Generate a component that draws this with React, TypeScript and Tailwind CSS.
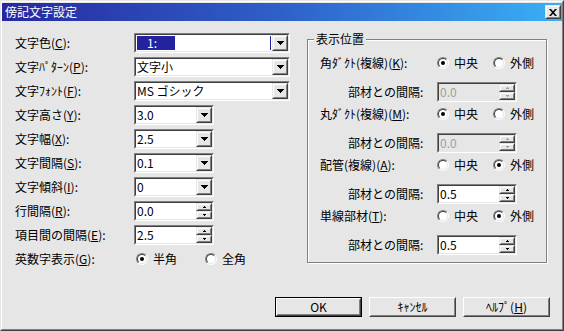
import type { ReactNode } from "react";

function Sunken({ className = "", disabled = false, children }: { className?: string; disabled?: boolean; children?: ReactNode }) {
  return (
    <div className={`border border-t-[#808080] border-l-[#808080] border-r-white border-b-white ${className}`}>
      <div
        className={`flex h-full w-full border border-t-[#404040] border-l-[#404040] border-r-[#e6e6e6] border-b-[#e6e6e6] ${
          disabled ? "bg-[#e6e6e6]" : "bg-white"
        }`}
      >
        {children}
      </div>
    </div>
  );
}

function Raised({ className = "", children }: { className?: string; children?: ReactNode }) {
  return (
    <div className={`border border-t-[#e6e6e6] border-l-[#e6e6e6] border-r-[#404040] border-b-[#404040] ${className}`}>
      <div className="flex h-full w-full items-center justify-center border border-t-white border-l-white border-r-[#808080] border-b-[#808080] bg-[#e6e6e6]">
        {children}
      </div>
    </div>
  );
}

const DropArrow = () => (
  <svg width="7" height="4" viewBox="0 0 7 4" className="block">
    <path d="M0 0h7v1H0zM1 1h5v1H1zM2 2h3v1H2zM3 3h1v1H3z" fill="#000" />
  </svg>
);

const TinyArrow = ({ up, disabled }: { up?: boolean; disabled?: boolean }) => (
  <svg width="3" height="2" viewBox="0 0 3 2" className="block">
    <path d={up ? "M1 0h1v1H1zM0 1h3v1H0z" : "M0 0h3v1H0zM1 1h1v1H1z"} fill={disabled ? "#a0a0a0" : "#000"} />
  </svg>
);

function Combo({ value, wide = false }: { value: string; wide?: boolean }) {
  return (
    <Sunken className={`h-[20px] ${wide ? "w-[156px]" : "w-[80px]"}`}>
      <span className="flex-1 truncate pl-px leading-[16px]">{value}</span>
      <Raised className="h-[16px] w-[16px]">
        <DropArrow />
      </Raised>
    </Sunken>
  );
}

function ColorCombo() {
  return (
    <Sunken className="h-[20px] w-[156px]">
      <div className="flex flex-1 items-center py-px pl-px">
        <span className="flex h-[14px] w-[38px] items-center bg-[#2323a0] pl-[10px] leading-[14px] text-white">1:</span>
        <span className="flex-1" />
        <span className="mr-[1px] h-[14px] w-px bg-[#2323a0]" />
      </div>
      <Raised className="h-[16px] w-[16px]">
        <DropArrow />
      </Raised>
    </Sunken>
  );
}

function Spin({ value, disabled = false }: { value: string; disabled?: boolean }) {
  return (
    <Sunken className="h-[20px] w-[80px]" disabled={disabled}>
      <span className={`flex-1 pl-px leading-[16px] ${disabled ? "text-[#a0a0a0]" : ""}`}>{value}</span>
      <div className="flex w-[16px] flex-col">
        <Raised className="h-[8px] w-full">
          <TinyArrow up disabled={disabled} />
        </Raised>
        <Raised className="h-[8px] w-full">
          <TinyArrow disabled={disabled} />
        </Raised>
      </div>
    </Sunken>
  );
}

function Radio({ checked }: { checked: boolean }) {
  return (
    <div className="flex h-[12px] w-[12px] shrink-0 rounded-full border border-t-[#808080] border-l-[#808080] border-r-white border-b-white">
      <div className="flex flex-1 items-center justify-center rounded-full border border-t-[#404040] border-l-[#404040] border-r-[#e6e6e6] border-b-[#e6e6e6] bg-white">
        {checked && <div className="h-[4px] w-[4px] rounded-full bg-black" />}
      </div>
    </div>
  );
}

function RadioOption({ label, checked, className = "" }: { label: string; checked: boolean; className?: string }) {
  return (
    <div className={`flex items-center gap-[5px] ${className}`}>
      <Radio checked={checked} />
      <span>{label}</span>
    </div>
  );
}

function Label({ text, mn, className = "" }: { text: string; mn?: string; className?: string }) {
  return (
    <span className={`shrink-0 ${className}`}>
      {text}
      {mn && (
        <>
          (<span className="underline">{mn}</span>)
        </>
      )}
      :
    </span>
  );
}

function PushButton({ children, isDefault = false }: { children: ReactNode; isDefault?: boolean }) {
  return (
    <div className={`h-[20px] w-[87px] ${isDefault ? "border border-black" : ""}`}>
      <div className="h-full w-full border border-t-white border-l-white border-r-[#404040] border-b-[#404040]">
        <div className="flex h-full w-full items-center justify-center border border-t-[#e6e6e6] border-l-[#e6e6e6] border-r-[#808080] border-b-[#808080]">
          {children}
        </div>
      </div>
    </div>
  );
}

const leftRows: { text: string; mn: string; control: ReactNode }[] = [
  { text: "文字色", mn: "C", control: <ColorCombo /> },
  { text: "文字ﾊﾟﾀｰﾝ", mn: "P", control: <Combo value="文字小" wide /> },
  { text: "文字ﾌｫﾝﾄ", mn: "F", control: <Combo value="MS ゴシック" wide /> },
  { text: "文字高さ", mn: "Y", control: <Combo value="3.0" /> },
  { text: "文字幅", mn: "X", control: <Combo value="2.5" /> },
  { text: "文字間隔", mn: "S", control: <Combo value="0.1" /> },
  { text: "文字傾斜", mn: "I", control: <Combo value="0" /> },
  { text: "行間隔", mn: "R", control: <Spin value="0.0" /> },
  { text: "項目間の間隔", mn: "E", control: <Spin value="2.5" /> },
];

const rightBlocks = [
  { text: "角ﾀﾞｸﾄ(複線)", mn: "K", outer: false, gap: "0.0", disabled: true },
  { text: "丸ﾀﾞｸﾄ(複線)", mn: "M", outer: false, gap: "0.0", disabled: true },
  { text: "配管(複線)", mn: "A", outer: true, gap: "0.5", disabled: false },
  { text: "単線部材", mn: "T", outer: true, gap: "0.5", disabled: false },
];

export default function App() {
  return (
    <div className="h-[331px] w-[564px] border border-t-[#e6e6e6] border-l-[#e6e6e6] border-r-[#404040] border-b-[#404040] bg-[#e6e6e6] font-['Noto_Sans_CJK_JP','Noto_Sans',sans-serif] text-[12px] leading-[14px] text-black">
      <div className="flex h-full w-full flex-col border border-t-white border-l-white border-r-[#808080] border-b-[#808080] pt-px">
        {/* Title bar */}
        <div className="flex h-[18px] items-center justify-between bg-gradient-to-r from-[#2727a0] via-[#2f60c8] to-[#3ab0f6] pl-[3px] pr-[1px]">
          <span className="text-[12px] leading-[14px] text-white">傍記文字設定</span>
          <Raised className="h-[14px] w-[16px]">
            <svg width="8" height="7" viewBox="0 0 8 7" className="block">
              <path d="M0 0h2l2 2.2L6 0h2L5 3.5 8 7H6L4 4.8 2 7H0l3-3.5z" fill="#000" />
            </svg>
          </Raised>
        </div>

        {/* Body */}
        <div className="flex h-[276px]">
          <div className="flex w-[288px] flex-col gap-[4px] pl-[13px] pt-[12px]">
            {leftRows.map((r) => (
              <div key={r.mn} className="flex h-[20px] items-center">
                <Label text={r.text} mn={r.mn} className="w-[119px]" />
                {r.control}
              </div>
            ))}
            <div className="flex h-[20px] items-center">
              <Label text="英数字表示" mn="G" className="w-[119px]" />
              <RadioOption label="半角" checked className="ml-[2px] w-[69px]" />
              <RadioOption label="全角" checked={false} />
            </div>
          </div>

          <div className="relative ml-[17px] mt-[18px] h-[224px] w-[240px] border border-[#808080] pl-[12px] pt-[13px] shadow-[inset_1px_1px_0_white,1px_1px_0_white]">
            <span className="absolute left-[6px] top-[-8px] bg-[#e6e6e6] px-[2px] leading-[14px]">表示位置</span>
            {rightBlocks.map((b, i) => (
              <div key={b.mn} className={i > 0 ? "mt-[2px]" : ""}>
                <div className="flex h-[20px] items-center">
                  <Label text={b.text} mn={b.mn} className="w-[117px]" />
                  <RadioOption label="中央" checked={!b.outer} className="w-[56px]" />
                  <RadioOption label="外側" checked={b.outer} />
                </div>
                <div className="mt-[9px] flex h-[20px] items-center pl-[28px]">
                  <Label text="部材との間隔" className="w-[89px]" />
                  <Spin value={b.gap} disabled={b.disabled} />
                </div>
              </div>
            ))}
          </div>
        </div>

        {/* Buttons */}
        <div className="flex justify-end gap-[7px] pr-[12px]">
          <PushButton isDefault>OK</PushButton>
          <PushButton>ｷｬﾝｾﾙ</PushButton>
          <PushButton>
            ﾍﾙﾌﾟ(<span className="underline">H</span>)
          </PushButton>
        </div>
      </div>
    </div>
  );
}
